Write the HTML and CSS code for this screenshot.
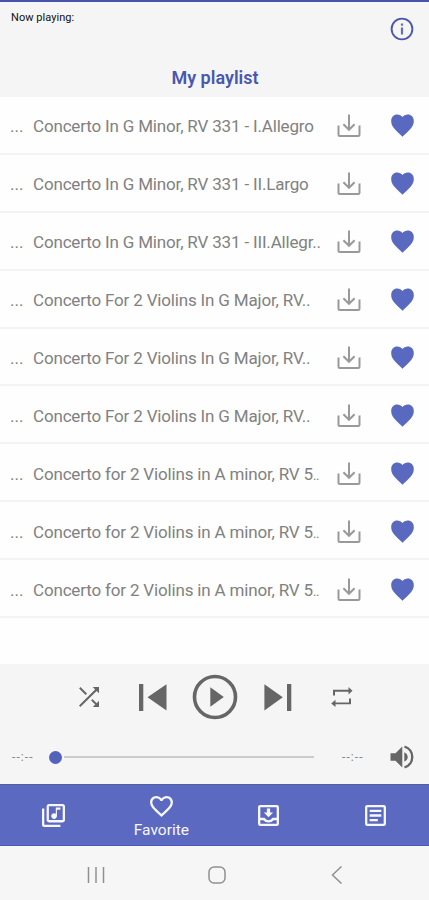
FILE: index.html
```
<!DOCTYPE html>
<html lang="en">
<head>
<meta charset="utf-8">
<title>My playlist</title>
<link rel="stylesheet" href="styles.css">
</head>
<body>
<svg class="defs" width="0" height="0">
  <symbol id="download" viewBox="0 0 24 24" fill="none" stroke="#999" stroke-width="2">
    <path d="M1.5 11.5V20.5Q1.5 22 3 22H21Q22.5 22 22.5 20.5V11.5"/><path d="M12 .5V15.5M6.4 10.2L12 15.8L17.6 10.2"/>
  </symbol>
  <symbol id="heart" viewBox="0 0 23 23">
    <path fill="#5a69c0" d="M11.5 22.7C9 20.2 5.6 17.4 3 14.2C1.1 11.8.2 9.5.2 6.9C.2 3.1 2.8.5 6.2.5C8.4.5 10.4 1.4 11.5 3C12.6 1.4 14.6.5 16.8.5C20.2.5 22.8 3.1 22.8 6.9C22.8 9.5 21.9 11.8 20 14.2C17.4 17.4 14 20.2 11.5 22.7Z"/>
  </symbol>
</svg>
<div class="phone">
  <header class="header">
    <div class="status">
      <span class="now">Now playing:</span>
      <svg class="info" viewBox="0 0 24 24"><circle cx="12" cy="12" r="10.4" fill="none" stroke="#4b57ad" stroke-width="1.9"/><path d="M12 10.5V17.5M12 6.5V8.8" stroke="#6670b0" stroke-width="2.2"/></svg>
    </div>
    <h1 class="title">My playlist</h1>
  </header>
  <main class="list">
    <div class="row"><span class="dots">...</span><span class="song">Concerto In G Minor, RV 331 - I.Allegro</span><svg class="dl"><use href="#download"/></svg><svg class="fav"><use href="#heart"/></svg></div>
    <div class="row"><span class="dots">...</span><span class="song">Concerto In G Minor, RV 331 - II.Largo</span><svg class="dl"><use href="#download"/></svg><svg class="fav"><use href="#heart"/></svg></div>
    <div class="row"><span class="dots">...</span><span class="song">Concerto In G Minor, RV 331 - III.Allegr..</span><svg class="dl"><use href="#download"/></svg><svg class="fav"><use href="#heart"/></svg></div>
    <div class="row"><span class="dots">...</span><span class="song">Concerto For 2 Violins In G Major, RV..</span><svg class="dl"><use href="#download"/></svg><svg class="fav"><use href="#heart"/></svg></div>
    <div class="row"><span class="dots">...</span><span class="song">Concerto For 2 Violins In G Major, RV..</span><svg class="dl"><use href="#download"/></svg><svg class="fav"><use href="#heart"/></svg></div>
    <div class="row"><span class="dots">...</span><span class="song">Concerto For 2 Violins In G Major, RV..</span><svg class="dl"><use href="#download"/></svg><svg class="fav"><use href="#heart"/></svg></div>
    <div class="row"><span class="dots">...</span><span class="song">Concerto for 2 Violins in A minor, RV 5<span class="cut">..</span></span><svg class="dl"><use href="#download"/></svg><svg class="fav"><use href="#heart"/></svg></div>
    <div class="row"><span class="dots">...</span><span class="song">Concerto for 2 Violins in A minor, RV 5<span class="cut">..</span></span><svg class="dl"><use href="#download"/></svg><svg class="fav"><use href="#heart"/></svg></div>
    <div class="row"><span class="dots">...</span><span class="song">Concerto for 2 Violins in A minor, RV 5<span class="cut">..</span></span><svg class="dl"><use href="#download"/></svg><svg class="fav"><use href="#heart"/></svg></div>
  </main>
  <section class="player">
    <div class="controls">
      <svg class="shuffle" viewBox="4 4 16 16"><path fill="#666" d="M10.4 9.2L5.2 4 4.1 5.1l5.2 5.2 1.1-1.1zM15 4l1.9 1.9L4 18.8 5.1 20 18.1 7.1 20 9V4h-5zm-.2 9.6l-1.1 1.1 3.3 3.3L15 20H20v-5l-1.9 1.9-3.3-3.3z"/></svg>
      <svg class="prev" viewBox="0 0 28 27"><path fill="#666" d="M0 0H4.3V27H0ZM8.5 13.3L27.5.3V26.5Z"/></svg>
      <svg class="play" viewBox="0 0 46 46"><circle cx="23" cy="23" r="20.5" fill="none" stroke="#666" stroke-width="3.6"/><path fill="#666" d="M18.3 13.2L31.8 23L18.3 32.8Z"/></svg>
      <svg class="next" viewBox="0 0 28 27"><path fill="#666" d="M23 0H27.3V27H23ZM.4.3L18.8 13.3L.4 26.5Z"/></svg>
      <svg class="repeat" viewBox="0 0 22 20"><path fill="#666" d="M2 8.5V2.8H17.5V0L21.5 3.7L17.5 7.4V4.7H4V8.5ZM20 11.5V17.3H4.5V20L.2 16.4L4.5 12.8V15.5H18V11.5Z"/></svg>
    </div>
    <div class="progress">
      <span class="time">--:--</span>
      <div class="slider"><span class="thumb"></span><span class="track"></span></div>
      <span class="time">--:--</span>
      <svg class="volume" viewBox="0 0 24 24"><path fill="#666" d="M.5 8.3H5.5L12.3 1.5V22.5L5.5 15.8H.5ZM14.3 7.2Q17.7 9 17.7 12T14.3 16.8Z"/><path fill="none" stroke="#666" stroke-width="2.4" d="M14.5 1.7C24.8 4.7 24.8 19.3 14.5 22.3"/></svg>
    </div>
  </section>
  <nav class="nav">
    <div class="tab"><svg class="i-music" viewBox="2 2 20 20"><path fill="#f7f7ff" d="M20 2H8c-1.1 0-2 .9-2 2v12c0 1.1.9 2 2 2h12c1.1 0 2-.9 2-2V4c0-1.1-.9-2-2-2zm0 14H8V4h12v12zm-7.5-1c1.38 0 2.5-1.12 2.5-2.5V7h3V5h-4v5.51c-.42-.32-.93-.51-1.5-.51-1.38 0-2.5 1.12-2.5 2.5s1.12 2.5 2.5 2.5zM4 6H2v14c0 1.1.9 2 2 2h14v-2H4V6z"/></svg></div>
    <div class="tab active"><svg class="i-heart" viewBox="2 3 20 18.35"><path fill="#f7f7ff" d="M16.5 3c-1.74 0-3.41.81-4.5 2.09C10.91 3.81 9.24 3 7.5 3 4.42 3 2 5.42 2 8.5c0 3.78 3.4 6.86 8.55 11.54L12 21.35l1.45-1.32C18.6 15.36 22 12.28 22 8.5 22 5.42 19.58 3 16.5 3zm-4.4 15.55l-.1.1-.1-.1C7.14 14.24 4 11.39 4 8.5 4 6.5 5.5 5 7.5 5c1.54 0 3.04.99 3.57 2.36h1.87C13.46 5.99 14.96 5 16.5 5c2 0 3.5 1.5 3.5 3.5 0 2.89-3.14 5.74-7.9 10.05z"/></svg><span>Favorite</span></div>
    <div class="tab"><svg class="i-box" viewBox="3 3 18 18"><path fill="#f7f7ff" fill-rule="evenodd" d="M5 3H19Q21 3 21 5V19Q21 21 19 21H5Q3 21 3 19V5Q3 3 5 3ZM5 5V14H8.6Q9.8 16 12 16T15.4 14H19V5ZM5 16V19H19V16H16.5Q14.8 18 12 18T7.5 16ZM10.6 6H13.4V9.5H16L12 13.5L8 9.5H10.6Z"/></svg></div>
    <div class="tab"><svg class="i-box" viewBox="3 3 18 18"><path fill="#f7f7ff" fill-rule="evenodd" d="M5 3H19Q21 3 21 5V19Q21 21 19 21H5Q3 21 3 19V5Q3 3 5 3ZM5 5V19H19V5ZM7 7H17V9H7ZM7 11H17V13H7ZM7 15H14V17H7Z"/></svg></div>
  </nav>
  <footer class="system">
    <svg viewBox="0 0 18 18"><path d="M1.5 1V17M9 1V17M16.5 1V17"/></svg>
    <svg viewBox="0 0 18 18"><rect x="1" y="1" width="16" height="16" rx="5"/></svg>
    <svg viewBox="0 0 18 18"><path d="M13.5 .5L4.5 9L13.5 17.5"/></svg>
  </footer>
</div>
</body>
</html>
```
FILE: styles.css
```
* { box-sizing: border-box; }
body { margin: 0; font-family: Roboto, "Liberation Sans", sans-serif; background: #fff; }
svg { display: block; flex: none; }
.defs { position: absolute; }
.phone { width: 429px; height: 900px; display: flex; flex-direction: column; overflow: hidden; background: #fefefe; }
.header { height: 97px; flex: none; border-top: 2px solid #4753aa; background: #f5f5f5; }
.status { height: 60px; display: flex; justify-content: space-between; padding: 9px 15px 0 11px; }
.now { font-size: 11px; line-height: 14px; color: #111; letter-spacing: 0.05px; }
.info { width: 24px; height: 24px; margin-top: 6px; }
.title { margin: 0; font-size: 18px; line-height: 31px; font-weight: 600; text-align: center; color: #4a57ae; padding-left: 1px; }
.list { flex: 1; min-height: 0; }
.row { height: 57.9px; display: flex; align-items: center; border-bottom: 2px solid #f3f3f3; padding: 2px 15px 0 10px; color: #818181; font-size: 17px; white-space: nowrap; }
.dots { width: 23px; padding-top: 1px; }
.song { width: 304px; padding-top: 1px; letter-spacing: -0.17px; }
.cut { font-size: 13px; letter-spacing: -0.3px; }
.dl { width: 24px; height: 24px; margin-top: 1px; }
.fav { width: 23px; height: 23px; margin-left: auto; }
.player { height: 120px; flex: none; background: #f5f5f5; }
.controls { height: 66px; display: flex; align-items: center; padding-left: 79px; }
.shuffle { width: 20px; height: 20px; }
.prev { width: 28px; height: 27px; margin-left: 39.5px; }
.play { width: 46px; height: 46px; margin-left: 25px; }
.next { width: 28px; height: 27px; margin-left: 26px; }
.repeat { width: 22px; height: 20px; margin-left: 39px; }
.progress { height: 54px; display: flex; align-items: center; padding: 0 15px 0 12px; }
.time { width: 22px; font-size: 12px; color: #888; letter-spacing: 1.1px; white-space: nowrap; }
.slider { width: 265px; margin: 0 28px 0 15px; display: flex; align-items: center; }
.thumb { width: 13px; height: 13px; border-radius: 50%; background: #5363bd; }
.track { flex: 1; height: 2px; margin-left: 2px; background: #cbcbcb; }
.volume { width: 24px; height: 24px; margin-left: auto; }
.nav { height: 62px; flex: none; display: grid; grid-template-columns: repeat(4, 1fr); background: #5c69c0; border-top: 1px solid #505da9; border-bottom: 1px solid #4a59bd; }
.tab { display: flex; flex-direction: column; align-items: center; justify-content: center; color: #f7f7ff; font-size: 15.5px; line-height: 18px; }
.active { padding: 4px 0 0 1px; }
.active span { margin-top: 4px; }
.i-music { width: 23px; height: 23px; }
.i-heart { width: 23px; height: 21px; }
.i-box { width: 21px; height: 21px; }
.system { height: 54px; flex: none; background: #f6f6f6; display: flex; align-items: center; justify-content: space-between; padding: 3px 83px 0 87px; }
.system svg { width: 18px; height: 18px; fill: none; stroke: #919191; stroke-width: 1.5; }
```
